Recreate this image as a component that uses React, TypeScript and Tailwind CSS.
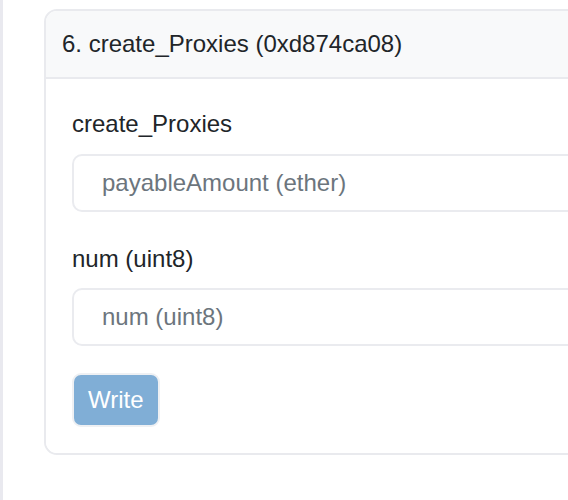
import React from 'react';

const fields = [
    { label: 'create_Proxies', placeholder: 'payableAmount (ether)', gap: 'mb-[16px]' },
    { label: 'num (uint8)', placeholder: 'num (uint8)', gap: 'mb-[15px]' },
];

const App = () => {
    return (
        <div
            className="min-h-[500px] w-[568px] overflow-hidden bg-white border-l-[3px] border-[#e9e9ef]"
            style={{ fontFamily: '"Liberation Sans", Arial, sans-serif' }}
        >
            <div className="pt-[9px] pl-[41px]">
                <div className="w-[600px] rounded-[13px] border-2 border-[#e9eaee] overflow-hidden">
                    <div className="h-[68px] bg-[#f8f9fa] border-b-2 border-[#e9eaee] px-[16px] flex items-center text-[24px] text-[#212529]">
                        6. create_Proxies (0xd874ca08)
                    </div>
                    <div className="px-[26px] pt-[31px] pb-[26px] bg-white flex flex-col items-start gap-[33px]">
                        {fields.map((f) => (
                            <div key={f.label} className="w-full">
                                <div className={`text-[24px] text-[#212529] leading-[28px] ${f.gap}`}>{f.label}</div>
                                <input
                                    className="block w-full h-[58px] rounded-[10px] border-2 border-[#eaebef] px-[28px] text-[24px] text-[#212529] placeholder:text-[#6c757d] outline-none"
                                    placeholder={f.placeholder}
                                />
                            </div>
                        ))}
                        <button className="block -mt-[6px] h-[54px] px-[14px] rounded-[9px] border-2 border-[#eef0f3] bg-[#80aed6] text-white text-[24px] leading-none">
                            Write
                        </button>
                    </div>
                </div>
            </div>
        </div>
    );
};

export default App;
